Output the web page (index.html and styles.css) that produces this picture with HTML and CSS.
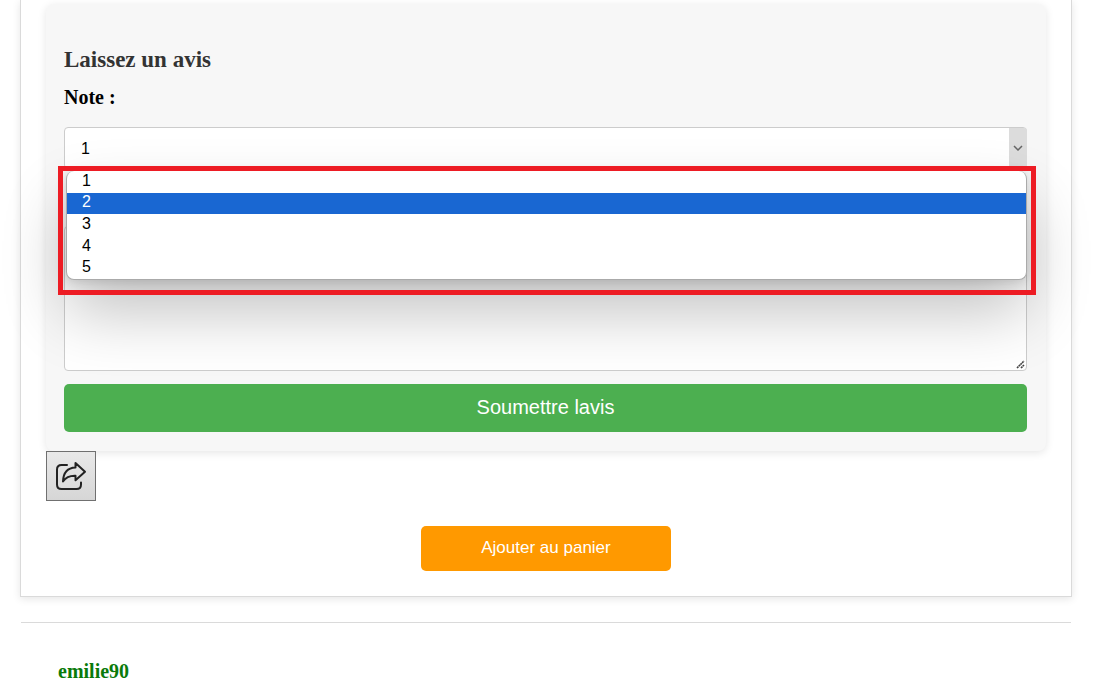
FILE: index.html
```html
<!DOCTYPE html>
<html lang="fr">
<head>
<meta charset="utf-8">
<meta name="viewport" content="width=device-width, initial-scale=1">
<title>Laissez un avis</title>
<link rel="stylesheet" href="styles.css">
</head>
<body>
<main class="page">
  <section class="product">
    <form class="review">
      <h3 class="review-title">Laissez un avis</h3>
      <label class="review-label" for="note">Note :</label>
      <div class="rating">
        <select class="rating-select" id="note" name="note">
          <option>1</option>
          <option>2</option>
          <option>3</option>
          <option>4</option>
          <option>5</option>
        </select>
        <span class="rating-arrow" aria-hidden="true">
          <svg width="10" height="6" viewBox="0 0 10 6" fill="none" stroke="#666" stroke-width="1.5"><path d="M1 1l4 4 4-4"/></svg>
        </span>
        <ul class="menu" role="listbox" aria-label="Note">
          <li class="menu-item" role="option">1</li>
          <li class="menu-item menu-item-active" role="option" aria-selected="true">2</li>
          <li class="menu-item" role="option">3</li>
          <li class="menu-item" role="option">4</li>
          <li class="menu-item" role="option">5</li>
        </ul>
        <div class="highlight"></div>
      </div>
      <div class="comment-field">
        <textarea class="comment" name="commentaire" aria-label="Commentaire"></textarea>
        <svg class="grip" width="9" height="9" viewBox="0 0 9 9" fill="none" stroke="#444" stroke-width="1.6" stroke-dasharray="2 0.4" aria-hidden="true"><path d="M1 8L8 1M5 8L8 5"/></svg>
      </div>
      <button class="submit" type="submit">Soumettre lavis</button>
    </form>
    <button class="share" type="button" aria-label="Partager">
      <svg width="32" height="30" viewBox="0 0 32 30" fill="none" stroke="#222" stroke-width="2" stroke-linejoin="round" stroke-linecap="round">
        <path d="M12 4H6.500Q2 4 2 8.500V23.500Q2 28 6.500 28H21.500Q26 28 26 23.500V21.500"/>
        <path d="M20.500 2L30 10.700L20.500 19.300V14.800Q12 14.500 8 20.500Q8.500 7 20.500 6.500Z"/>
      </svg>
    </button>
    <button class="cart" type="button">Ajouter au panier</button>
  </section>
  <hr class="divider">
  <article class="posted">
    <h4 class="author">emilie90</h4>
  </article>
</main>
</body>
</html>
```
FILE: styles.css
```css
* {
  box-sizing: border-box;
}

body {
  margin: 0;
  background: #fff;
  font-family: "Liberation Serif", "Times New Roman", serif;
}

.page {
  padding: 0 34px 0 20px;
}

.product {
  display: flex;
  flex-direction: column;
  padding: 4px 25px 25px;
  border: 1px solid #dadada;
  border-top: 0;
  box-shadow: 0 2px 8px rgba(0, 0, 0, 0.1);
}

.review {
  display: flex;
  flex-direction: column;
  padding: 42px 19px 19px 18px;
  border-radius: 8px;
  background: #f7f7f7;
  box-shadow: 0 2px 8px rgba(0, 0, 0, 0.1);
}

.review-title {
  margin: 0;
  color: #333;
  font-size: 23px;
  line-height: 28px;
}

.review-label {
  margin: 11px 0 18px;
  color: #000;
  font-size: 20px;
  font-weight: bold;
  line-height: 24px;
}

.rating {
  position: relative;
  margin-bottom: 57px;
}

.rating-select {
  display: block;
  width: 100%;
  height: 42px;
  padding: 0 16px;
  border: 1px solid #ccc;
  border-radius: 4px;
  appearance: none;
  background: #fff;
  color: #000;
  font: 16px "Liberation Sans", Arial, sans-serif;
}

.rating-arrow {
  position: absolute;
  top: 1px;
  right: 0;
  display: flex;
  align-items: center;
  justify-content: center;
  width: 18px;
  height: 40px;
  border-radius: 0 3px 3px 0;
  background: #dcdcdc;
  pointer-events: none;
}

.menu {
  position: absolute;
  z-index: 2;
  top: 44px;
  right: 0;
  left: 2px;
  display: flex;
  flex-direction: column;
  height: 109px;
  margin: 0;
  padding: 0;
  overflow: hidden;
  border: 1px solid #aaa;
  border-top: 0;
  border-radius: 8px;
  background: #fff;
  box-shadow: 0 32px 64px rgba(0, 0, 0, 0.24), 0 2px 12px rgba(0, 0, 0, 0.14);
  font: 16px "Liberation Sans", Arial, sans-serif;
  list-style: none;
}

.menu-item {
  display: flex;
  flex: 1;
  align-items: center;
  padding: 0 15px 2px;
}

.menu-item-active {
  background: #1967d2;
  color: #fff;
}

.highlight {
  position: absolute;
  z-index: 3;
  top: 39px;
  right: -9px;
  left: -6px;
  height: 129px;
  border: 5px solid #ed1c24;
  pointer-events: none;
}

.comment-field {
  position: relative;
  margin-bottom: 13px;
}

.comment {
  display: block;
  width: 100%;
  height: 145px;
  padding: 12px;
  border: 1px solid #ccc;
  border-radius: 4px;
  background: #fff;
  font: 16px "Liberation Sans", Arial, sans-serif;
  resize: none;
}

.grip {
  position: absolute;
  right: 2px;
  bottom: 2px;
  pointer-events: none;
}

.submit {
  height: 48px;
  padding: 0 0 2px;
  border: 0;
  border-radius: 5px;
  background: #4caf50;
  color: #fff;
  font: 20px "Liberation Sans", Arial, sans-serif;
}

.share {
  z-index: 1;
  display: flex;
  align-items: center;
  justify-content: center;
  width: 50px;
  height: 50px;
  margin-bottom: 25px;
  padding: 0;
  border: 1px solid #707070;
  background: linear-gradient(#e9e9e9, #d6d6d6);
}

.cart {
  align-self: center;
  width: 250px;
  height: 45px;
  padding: 0 0 2px;
  border: 0;
  border-radius: 5px;
  background: #ff9900;
  color: #fff;
  font: 17px "Liberation Sans", Arial, sans-serif;
}

.divider {
  margin: 25px 1px 0;
  border: 0;
  border-top: 1px solid #dadada;
}

.posted {
  padding: 37px 38px 0;
}

.author {
  margin: 0;
  color: #0a7a0a;
  font-size: 20px;
  line-height: 22px;
}
```
